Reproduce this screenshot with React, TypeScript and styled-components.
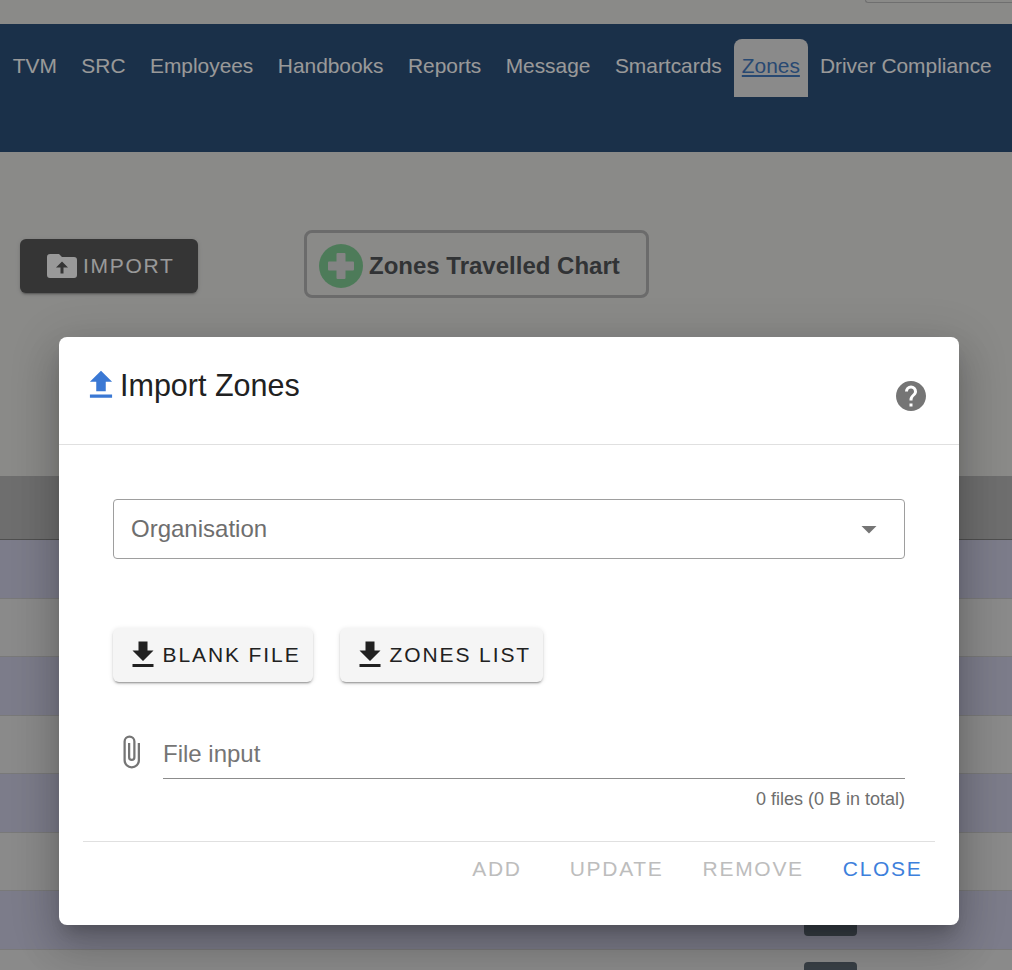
import React from 'react'
import styled, { createGlobalStyle } from 'styled-components'

const GlobalStyle = createGlobalStyle`
  html, body {
    margin: 0;
    height: 970px;
    overflow: hidden;
    background: #e3e3e0;
    font-family: "Liberation Sans", Arial, sans-serif;
  }
  * {
    box-sizing: border-box;
  }
`

const Page = styled.div`
  position: relative;
  height: 970px;
  overflow: hidden;
`

const TopStrip = styled.div`
  height: 24px;
  display: flex;
  justify-content: flex-end;
`

const SearchStub = styled.div`
  width: 147px;
  height: 3px;
  border: 1px solid #b2b2b2;
  border-top: 0;
  border-right: 0;
  border-bottom-left-radius: 4px;
`

const NavBar = styled.nav`
  height: 128px;
  background: #163d6b;
  padding: 15px 0 0 0.5px;
  display: flex;
  align-items: flex-start;
`

const NavTab = styled.a<{ $active?: boolean }>`
  height: 58px;
  padding: 15px ${({ $active }) => ($active ? '7.8px' : '12.25px')} 0;
  font-size: 20.9px;
  line-height: 24px;
  color: ${({ $active }) => ($active ? '#2f6bb8' : '#ffffff')};
  text-decoration: ${({ $active }) => ($active ? 'underline' : 'none')};
  background: ${({ $active }) => ($active ? '#e3e3e3' : 'transparent')};
  border-radius: ${({ $active }) => ($active ? '8px 8px 0 0' : '0')};
  white-space: nowrap;
`

const ActionBand = styled.section`
  height: 324px;
  padding: 78px 0 0 20px;
  display: flex;
  align-items: flex-start;
  gap: 106px;
`

const ImportButton = styled.div`
  width: 178px;
  height: 54px;
  margin-top: 9px;
  padding-left: 24px;
  display: flex;
  align-items: center;
  gap: 3px;
  border-radius: 6px;
  background: #464646;
  color: #ffffff;
  font-size: 21px;
  letter-spacing: 1.7px;
  box-shadow: 0 3px 1px -2px rgba(0, 0, 0, 0.2), 0 2px 2px rgba(0, 0, 0, 0.14), 0 1px 5px rgba(0, 0, 0, 0.12);
`

const ChartButton = styled.div`
  width: 345px;
  height: 68px;
  padding: 4px 0 0 12px;
  display: flex;
  align-items: center;
  gap: 6px;
  border: 3px solid #aaaaaa;
  border-radius: 8px;
  color: #3f4347;
  font-size: 24px;
  font-weight: 700;
`

const TableHead = styled.div`
  height: 64px;
  background: #b0b0b0;
  border-bottom: 1px solid #777777;
`

const TableRow = styled.div<{ $tinted: boolean }>`
  height: 58.5px;
  padding-right: 155px;
  display: flex;
  align-items: center;
  justify-content: flex-end;
  background: ${({ $tinted }) => ($tinted ? '#cacae4' : '#e4e4e4')};
  border-bottom: 1px solid #c4c4c4;
`

const EditChip = styled.div`
  width: 53px;
  height: 32px;
  display: flex;
  align-items: center;
  justify-content: center;
  border-radius: 4px;
  background: #4d5a66;
  color: #ffffff;
  font-size: 14px;
`

const Scrim = styled.div`
  position: absolute;
  inset: 0;
  padding: 337px 53px 0 59px;
  background: rgba(33, 33, 33, 0.46);
`

const Modal = styled.div`
  width: 900px;
  height: 588px;
  display: flex;
  flex-direction: column;
  border-radius: 8px;
  background: #ffffff;
  box-shadow: 0 11px 15px -7px rgba(0, 0, 0, 0.2), 0 24px 38px 3px rgba(0, 0, 0, 0.14),
    0 9px 46px 8px rgba(0, 0, 0, 0.12);
`

const ModalHeader = styled.header`
  height: 108px;
  padding: 29px 30px 0 23px;
  display: flex;
  justify-content: space-between;
  align-items: flex-start;
  border-bottom: 1px solid #e0e0e0;
`

const ModalTitle = styled.h2`
  margin: 0;
  display: flex;
  align-items: center;
  font-size: 30.5px;
  line-height: 36px;
  font-weight: 400;
  color: #212121;
`

const HelpSlot = styled.div`
  margin-top: 12px;
  display: flex;
`

const ModalBody = styled.div`
  flex: 1;
  padding: 54px 54px 0;
  display: flex;
  flex-direction: column;
`

const SelectBox = styled.div`
  height: 60px;
  padding: 0 17px 0 17px;
  display: flex;
  align-items: center;
  justify-content: space-between;
  border: 1px solid #9e9e9e;
  border-radius: 4px;
  color: #6e6e6e;
  font-size: 24px;
`

const DownloadRow = styled.div`
  margin-top: 69px;
  display: flex;
  gap: 27px;
`

const DownloadButton = styled.div<{ $width: number }>`
  width: ${({ $width }) => $width}px;
  height: 54px;
  padding-left: 11.5px;
  display: flex;
  align-items: center;
  gap: 2px;
  border-radius: 6px;
  background: #f5f5f5;
  color: #212121;
  font-size: 21px;
  letter-spacing: 1.9px;
  white-space: nowrap;
  box-shadow: 0 3px 1px -2px rgba(0, 0, 0, 0.2), 0 2px 2px rgba(0, 0, 0, 0.14), 0 1px 5px rgba(0, 0, 0, 0.12);
`

const FileRow = styled.div`
  margin-top: 44px;
  display: flex;
  gap: 14px;
`

const ClipSlot = styled.div`
  width: 36px;
  padding-top: 8px;
  display: flex;
`

const FileField = styled.div`
  flex: 1;
`

const FileLabel = styled.div`
  height: 53px;
  padding-top: 14px;
  border-bottom: 1px solid #8c8c8c;
  color: #757575;
  font-size: 24px;
  line-height: 28px;
`

const FileCount = styled.div`
  margin-top: 10px;
  text-align: right;
  color: #6e6e6e;
  font-size: 18px;
  line-height: 20px;
`

const ModalFooter = styled.footer`
  margin: 0 24px;
  height: 84px;
  padding: 14px 12.5px 0 0;
  display: flex;
  justify-content: flex-end;
  gap: 39px;
  border-top: 1px solid #e0e0e0;
  font-size: 21px;
  line-height: 26px;
  letter-spacing: 1.7px;
`

const FooterAction = styled.span<{ $primary?: boolean }>`
  color: ${({ $primary }) => ($primary ? '#3d80dc' : '#bdbdbd')};

  &:first-child {
    margin-right: 9px;
  }
`

const Icon = styled.svg<{ $color: string }>`
  flex: none;
  fill: ${({ $color }) => $color};
`

const navItems = ['TVM', 'SRC', 'Employees', 'Handbooks', 'Reports', 'Message', 'Smartcards', 'Zones', 'Driver Compliance']
const rows = [0, 1, 2, 3, 4, 5, 6, 7]

const mdi = {
  upload: 'M9,16V10H5L12,3L19,10H15V16H9M5,20V18H19V20H5Z',
  download: 'M5,20H19V18H5M19,9H15V3H9V9H5L12,16L19,9Z',
  folderUpload: 'M20 6H12L10 4H4A2 2 0 0 0 2 6V18A2 2 0 0 0 4 20H20A2 2 0 0 0 22 18V8A2 2 0 0 0 20 6M13 13V17H11V13H8L12.01 9L16 13H13Z',
  help: 'M15.07,11.25L14.17,12.17C13.45,12.89 13,13.5 13,15H11V14.5C11,13.39 11.45,12.39 12.17,11.67L13.41,10.41C13.78,10.05 14,9.55 14,9C14,7.89 13.1,7 12,7A2,2 0 0,0 10,9H8A4,4 0 0,1 12,5A4,4 0 0,1 16,9C16,9.88 15.64,10.67 15.07,11.25M13,19H11V17H13M12,2A10,10 0 0,0 2,12C2,17.53 6.47,22 12,22C17.53,22 22,17.53 22,12C22,6.47 17.5,2 12,2Z',
  clip: 'M16.5,6V17.5A4,4 0 0,1 12.5,21.5A4,4 0 0,1 8.5,17.5V5A2.5,2.5 0 0,1 11,2.5A2.5,2.5 0 0,1 13.5,5V15.5A1,1 0 0,1 12.5,16.5A1,1 0 0,1 11.5,15.5V6H10V15.5A2.5,2.5 0 0,0 12.5,18A2.5,2.5 0 0,0 15,15.5V5A4,4 0 0,0 11,1A4,4 0 0,0 7,5V17.5A5.5,5.5 0 0,0 12.5,23A5.5,5.5 0 0,0 18,17.5V6H16.5Z',
  caret: 'M7,10L12,15L17,10H7Z'
}

function MdiIcon({ path, size, color }: { path: string; size: number; color: string }) {
  return (
    <Icon $color={color} width={size} height={size} viewBox="0 0 24 24">
      <path d={path} />
    </Icon>
  )
}

export default function App() {
  return (
    <Page>
      <GlobalStyle />
      <TopStrip>
        <SearchStub />
      </TopStrip>
      <NavBar>
        {navItems.map(item => (
          <NavTab key={item} $active={item === 'Zones'}>
            {item}
          </NavTab>
        ))}
      </NavBar>
      <ActionBand>
        <ImportButton>
          <MdiIcon path={mdi.folderUpload} size={36} color="#ffffff" />
          IMPORT
        </ImportButton>
        <ChartButton>
          <svg width="44" height="44" viewBox="0 0 44 44">
            <circle cx="22" cy="22" r="22" fill="#74c88a" />
            <path d="M17.5 10a1 1 0 0 1 1-1h7a1 1 0 0 1 1 1v7.5H34a1 1 0 0 1 1 1v7a1 1 0 0 1-1 1h-7.500V34a1 1 0 0 1-1 1h-7a1 1 0 0 1-1-1v-7.500H10a1 1 0 0 1-1-1v-7a1 1 0 0 1 1-1h7.500z" fill="#d8d8d8" />
          </svg>
          Zones Travelled Chart
        </ChartButton>
      </ActionBand>
      <TableHead />
      {rows.map(row => (
        <TableRow key={row} $tinted={row % 2 === 0}>
          <EditChip>{row === 6 && 'Edit'}</EditChip>
        </TableRow>
      ))}
      <Scrim>
        <Modal>
          <ModalHeader>
            <ModalTitle>
              <MdiIcon path={mdi.upload} size={38} color="#3a78d4" />
              Import Zones
            </ModalTitle>
            <HelpSlot>
              <MdiIcon path={mdi.help} size={36} color="#757575" />
            </HelpSlot>
          </ModalHeader>
          <ModalBody>
            <SelectBox>
              Organisation
              <MdiIcon path={mdi.caret} size={36} color="#757575" />
            </SelectBox>
            <DownloadRow>
              <DownloadButton $width={200}>
                <MdiIcon path={mdi.download} size={36} color="#212121" />
                BLANK FILE
              </DownloadButton>
              <DownloadButton $width={203}>
                <MdiIcon path={mdi.download} size={36} color="#212121" />
                ZONES LIST
              </DownloadButton>
            </DownloadRow>
            <FileRow>
              <ClipSlot>
                <MdiIcon path={mdi.clip} size={36} color="#757575" />
              </ClipSlot>
              <FileField>
                <FileLabel>File input</FileLabel>
                <FileCount>0 files (0 B in total)</FileCount>
              </FileField>
            </FileRow>
          </ModalBody>
          <ModalFooter>
            <FooterAction>ADD</FooterAction>
            <FooterAction>UPDATE</FooterAction>
            <FooterAction>REMOVE</FooterAction>
            <FooterAction $primary>CLOSE</FooterAction>
          </ModalFooter>
        </Modal>
      </Scrim>
    </Page>
  )
}
